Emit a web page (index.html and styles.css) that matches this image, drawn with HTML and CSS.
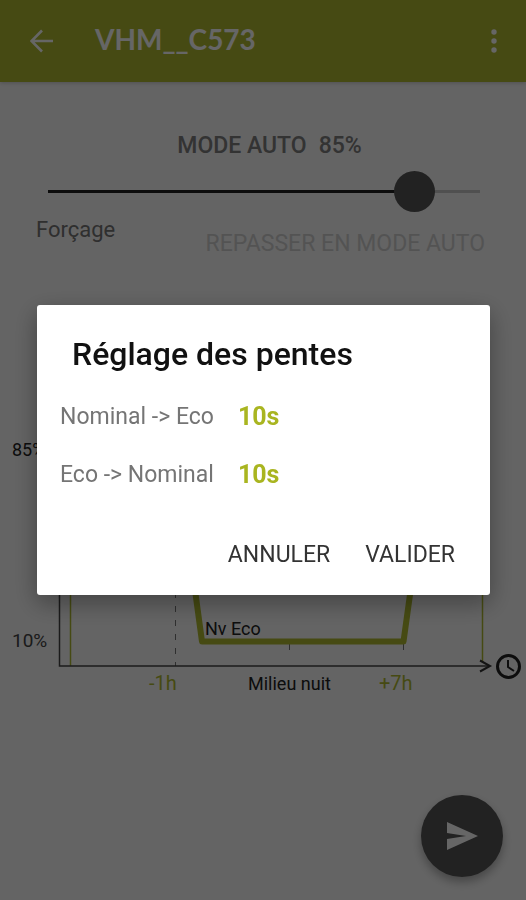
FILE: index.html
```html
<!DOCTYPE html>
<html lang="fr">
<head>
  <meta charset="utf-8">
  <meta name="viewport" content="width=device-width, initial-scale=1">
  <title>VHM__C573</title>
  <link rel="stylesheet" href="styles.css">
</head>
<body>
  <header class="app-bar">
    <button class="icon-button" type="button" aria-label="Retour">
      <svg class="icon" viewBox="0 0 24 24" aria-hidden="true"><path d="M23 12H2M12 1.500L1.500 12L12 22.500" fill="none" stroke="currentColor" stroke-width="2.600"/></svg>
    </button>
    <h1 class="app-title">VHM__C573</h1>
    <button class="icon-button" type="button" aria-label="Plus d’options">
      <svg class="icon" viewBox="0 0 24 24" aria-hidden="true" fill="currentColor"><circle cx="12" cy="3" r="2.700"/><circle cx="12" cy="12" r="2.700"/><circle cx="12" cy="21" r="2.700"/></svg>
    </button>
  </header>

  <main class="content">
    <label class="mode" for="level"><span>MODE AUTO</span><span>85%</span></label>
    <input class="slider" id="level" type="range" min="0" max="100" value="85">
    <div class="override">
      <span class="override-label">Forçage</span>
      <button class="override-reset" type="button" disabled>REPASSER EN MODE AUTO</button>
    </div>

    <svg class="chart" viewBox="0 0 526 300" role="img" aria-label="Profil d’éclairage de la nuit">
      <g fill="none">
        <path class="limit" d="M70.500 10V266M482.500 10V262"/>
        <path class="guide" d="M175.500 10V266M289.500 244V258M403.500 244V258"/>
        <path class="axis" d="M59.500 10V266H488"/>
        <path class="arrow" d="M480 260.500L490 266L480 271.500"/>
        <path class="profile" d="M70 50H176L202 241.500H403.500L430 50H482"/>
        <circle class="clock" cx="508.500" cy="266.500" r="11"/>
        <path class="clock-hands" d="M508 260V267L514 271"/>
      </g>
      <text class="tick" x="12" y="56">85%</text>
      <text class="tick percent" x="12" y="247">10%</text>
      <text class="tick" x="205" y="235">Nv Eco</text>
      <text class="tick hour" x="149" y="290">-1h</text>
      <text class="tick" x="248" y="290">Milieu nuit</text>
      <text class="tick hour" x="379" y="290">+7h</text>
    </svg>
  </main>

  <button class="send" type="button" aria-label="Envoyer">
    <svg class="send-icon" viewBox="0 0 32 28" aria-hidden="true"><path d="M1 0L32 14L1 28V17L20 14L1 11Z" fill="currentColor"/></svg>
  </button>

  <div class="scrim">
    <section class="dialog" role="dialog" aria-modal="true" aria-labelledby="dialog-title">
      <h2 class="dialog-title" id="dialog-title">Réglage des pentes</h2>
      <dl class="slopes">
        <dt>Nominal -&gt; Eco</dt>
        <dd>10s</dd>
        <dt>Eco -&gt; Nominal</dt>
        <dd>10s</dd>
      </dl>
      <div class="actions">
        <button class="action" type="button">ANNULER</button>
        <button class="action" type="button">VALIDER</button>
      </div>
    </section>
  </div>
</body>
</html>
```
FILE: styles.css
```css
* {
  box-sizing: border-box;
}

body {
  margin: 0;
  min-height: 100vh;
  background: #fafafa;
  color: #757575;
  font-family: Roboto, "Liberation Sans", sans-serif;
}

button {
  padding: 0;
  border: 0;
  background: none;
  color: inherit;
  font: inherit;
}

h1,
h2,
dl,
dd {
  margin: 0;
}

.app-bar {
  display: flex;
  align-items: center;
  height: 82px;
  padding: 0 20px 0 30px;
  background: #afba30;
  color: #fff;
  box-shadow: 0 1px 4px rgba(0, 0, 0, 0.2);
}

.icon-button {
  display: flex;
}

.icon {
  width: 24px;
  height: 24px;
}

.app-title {
  flex: 1;
  padding: 0 0 4px 41px;
  font: bold 28px/36px Lato, "Open Sans", sans-serif;
}

.content {
  display: flex;
  flex-direction: column;
}

.mode {
  display: flex;
  justify-content: center;
  gap: 12px;
  margin-top: 49px;
  padding-left: 13px;
  color: #808080;
  font-size: 23px;
  font-weight: 500;
  line-height: 30px;
}

.slider {
  appearance: none;
  height: 41px;
  margin: 10px 26px 0 27px;
  background: linear-gradient(90deg, #222 85%, #c8c8c8 0) no-repeat center / calc(100% - 41px) 3px;
}

.slider::-webkit-slider-thumb {
  appearance: none;
  width: 41px;
  height: 41px;
  border-radius: 50%;
  background: #555;
}

.override {
  display: flex;
  justify-content: space-between;
  padding: 3px 41px 0 36px;
  font-size: 23px;
  line-height: 30px;
}

.override-label {
  font-size: 22px;
}

.override-reset {
  margin-top: 14px;
  color: #d0d0d0;
  font-size: 23px;
}

.chart {
  display: block;
  width: 100%;
  margin-top: 141px;
}

.limit {
  stroke: #afba30;
  stroke-width: 1.5;
}

.guide {
  stroke: #777;
  stroke-dasharray: 6 8;
}

.axis {
  stroke: #444;
  stroke-width: 1.5;
}

.arrow {
  stroke: #333;
  stroke-width: 2;
}

.profile {
  stroke: #afba30;
  stroke-linejoin: round;
  stroke-width: 6;
}

.clock {
  stroke: #222;
  stroke-width: 3;
}

.clock-hands {
  stroke: #222;
  stroke-width: 2;
}

.tick {
  fill: #222;
  font-size: 18px;
}

.percent {
  fill: #444;
  font-size: 19px;
}

.hour {
  fill: #afba30;
  font-size: 20px;
}

.send {
  position: fixed;
  right: 23px;
  bottom: 23px;
  display: flex;
  align-items: center;
  justify-content: center;
  width: 82px;
  height: 82px;
  border-radius: 50%;
  background: #555;
  color: #fff;
  box-shadow: 0 5px 10px rgba(0, 0, 0, 0.3);
}

.send-icon {
  width: 32px;
  height: 28px;
}

.scrim {
  position: fixed;
  inset: 0;
  display: flex;
  align-items: center;
  padding: 0 36px 0 37px;
  background: rgba(0, 0, 0, 0.6);
}

.dialog {
  flex: 1;
  padding: 29px 35px 25px 23px;
  border-radius: 3px;
  background: #fff;
  box-shadow: 0 8px 24px rgba(0, 0, 0, 0.35);
}

.dialog-title {
  padding-left: 12px;
  color: #111;
  font-size: 32px;
  font-weight: 500;
  line-height: 40px;
}

.slopes {
  display: grid;
  grid-template-columns: max-content 1fr;
  gap: 28px 24px;
  margin-top: 28px;
  font-size: 23px;
  line-height: 30px;
}

.slopes dd {
  color: #a9b520;
  font-size: 25px;
  font-weight: 700;
}

.actions {
  display: flex;
  justify-content: flex-end;
  gap: 35px;
  margin-top: 50px;
}

.action {
  color: #333;
  font-size: 23px;
  line-height: 30px;
}
```
